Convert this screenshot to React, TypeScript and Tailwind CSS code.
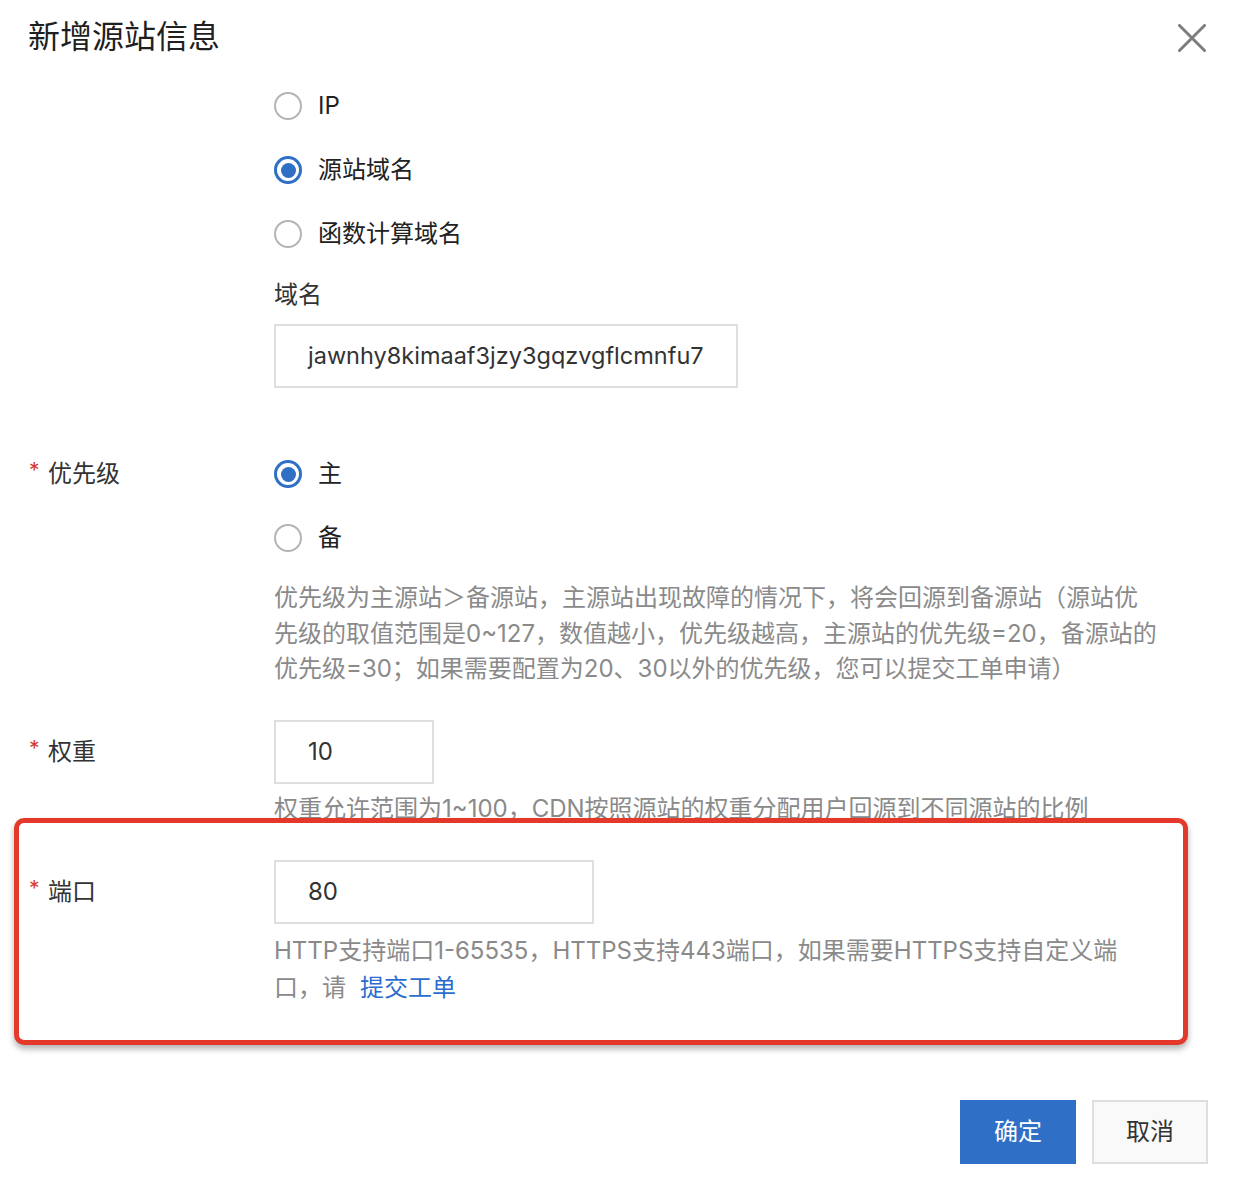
import React from 'react';

const Radio: React.FC<{ label: string; checked?: boolean }> = ({ label, checked }) => (
  <div className="flex items-center h-[64px] gap-[16px]">
    {checked ? (
      <span className="w-[28px] h-[28px] rounded-full border-[3px] border-[#2f6fc6] flex items-center justify-center">
        <span className="w-[15px] h-[15px] rounded-full bg-[#2f6fc6]" />
      </span>
    ) : (
      <span className="w-[28px] h-[28px] rounded-full border-2 border-[#b4b4b4]" />
    )}
    <span className="text-[24px] text-[#222]">{label}</span>
  </div>
);

const Label: React.FC<{ text?: string; required?: boolean }> = ({ text, required }) => (
  <div className="w-[246px] shrink-0 h-[64px] flex items-center text-[24px] text-[#333]">
    {required && <span className="w-[20px] text-[21px] text-[#d9372b] -mt-[6px] pl-[1px]">*</span>}
    {text}
  </div>
);

export default function App() {
  return (
    <div className="w-[1252px] h-[1184px] bg-white overflow-hidden font-['Inter','Noto_Sans_CJK_SC',sans-serif]">
      {/* Header */}
      <div className="flex items-start justify-between pl-[28px] pr-[46px] pt-[18px] h-[74px]">
        <h1 className="text-[32px] leading-[38px] text-[#1f1f1f]">新增源站信息</h1>
        <button className="mt-[6px] w-[28px] h-[28px]">
          <svg viewBox="0 0 28 28" className="w-[28px] h-[28px]">
            <path d="M1.5 1.5 L26.5 26.5 M26.5 1.5 L1.5 26.5" stroke="#7d7d7d" strokeWidth="3" strokeLinecap="round" />
          </svg>
        </button>
      </div>

      <div className="pl-[28px]">
        {/* Origin type */}
        <div className="flex">
          <div className="w-[246px] shrink-0" />
          <div>
            <Radio label="IP" />
            <Radio label="源站域名" checked />
            <Radio label="函数计算域名" />
            <div className="mt-[11px] leading-[36px] text-[24px] text-[#333]">域名</div>
            <div className="mt-[11px] w-[464px] h-[64px] border-2 border-[#dedede] pl-[32px] flex items-center text-[23.5px] text-[#333] overflow-hidden whitespace-nowrap">
              jawnhy8kimaaf3jzy3gqzvgflcmnfu7
            </div>
          </div>
        </div>

        {/* Priority */}
        <div className="flex mt-[54px]">
          <Label text="优先级" required />
          <div>
            <Radio label="主" checked />
            <Radio label="备" />
            <div className="mt-[10px] leading-[35.5px] text-[24px] text-[#8a8a8a] whitespace-nowrap">
              <div>优先级为主源站＞备源站，主源站出现故障的情况下，将会回源到备源站（源站优</div>
              <div>先级的取值范围是0~127，数值越小，优先级越高，主源站的优先级=20，备源站的</div>
              <div>优先级=30；如果需要配置为20、30以外的优先级，您可以提交工单申请）</div>
            </div>
          </div>
        </div>

        {/* Weight */}
        <div className="flex mt-[33px]">
          <Label text="权重" required />
          <div>
            <div className="w-[160px] h-[64px] border-2 border-[#dedede] pl-[32px] flex items-center text-[24px] text-[#333]">
              10
            </div>
            <div className="mt-[7px] leading-[36px] text-[24px] text-[#8a8a8a] whitespace-nowrap">
              权重允许范围为1~100，CDN按照源站的权重分配用户回源到不同源站的比例
            </div>
          </div>
        </div>
      </div>

      {/* Port (highlighted) */}
      <div className="relative -mt-[9px] ml-[14px] w-[1174px] h-[227px] border-[5px] border-[#e3382a] rounded-[10px] bg-white shadow-[0_4px_6px_rgba(0,0,0,0.3)] pt-[37px] pl-[9px]">
        <div className="flex">
          <Label text="端口" required />
          <div>
            <div className="w-[320px] h-[64px] border-2 border-[#dedede] pl-[32px] flex items-center text-[24px] text-[#333]">
              80
            </div>
            <div className="mt-[8px] leading-[37px] text-[24px] text-[#8a8a8a] whitespace-nowrap">
              <div>HTTP支持端口1-65535，HTTPS支持443端口，如果需要HTTPS支持自定义端</div>
              <div>
                口，请<a className="ml-[14px] text-[#2b6dcf] cursor-pointer">提交工单</a>
              </div>
            </div>
          </div>
        </div>
      </div>

      {/* Footer */}
      <div className="flex justify-end gap-[16px] pr-[44px] mt-[55px]">
        <button className="w-[116px] h-[64px] bg-[#2f6fc6] text-white text-[24px]">确定</button>
        <button className="w-[116px] h-[64px] bg-[#f9f9f9] border-2 border-[#dedede] text-[#333] text-[24px]">取消</button>
      </div>
    </div>
  );
}
